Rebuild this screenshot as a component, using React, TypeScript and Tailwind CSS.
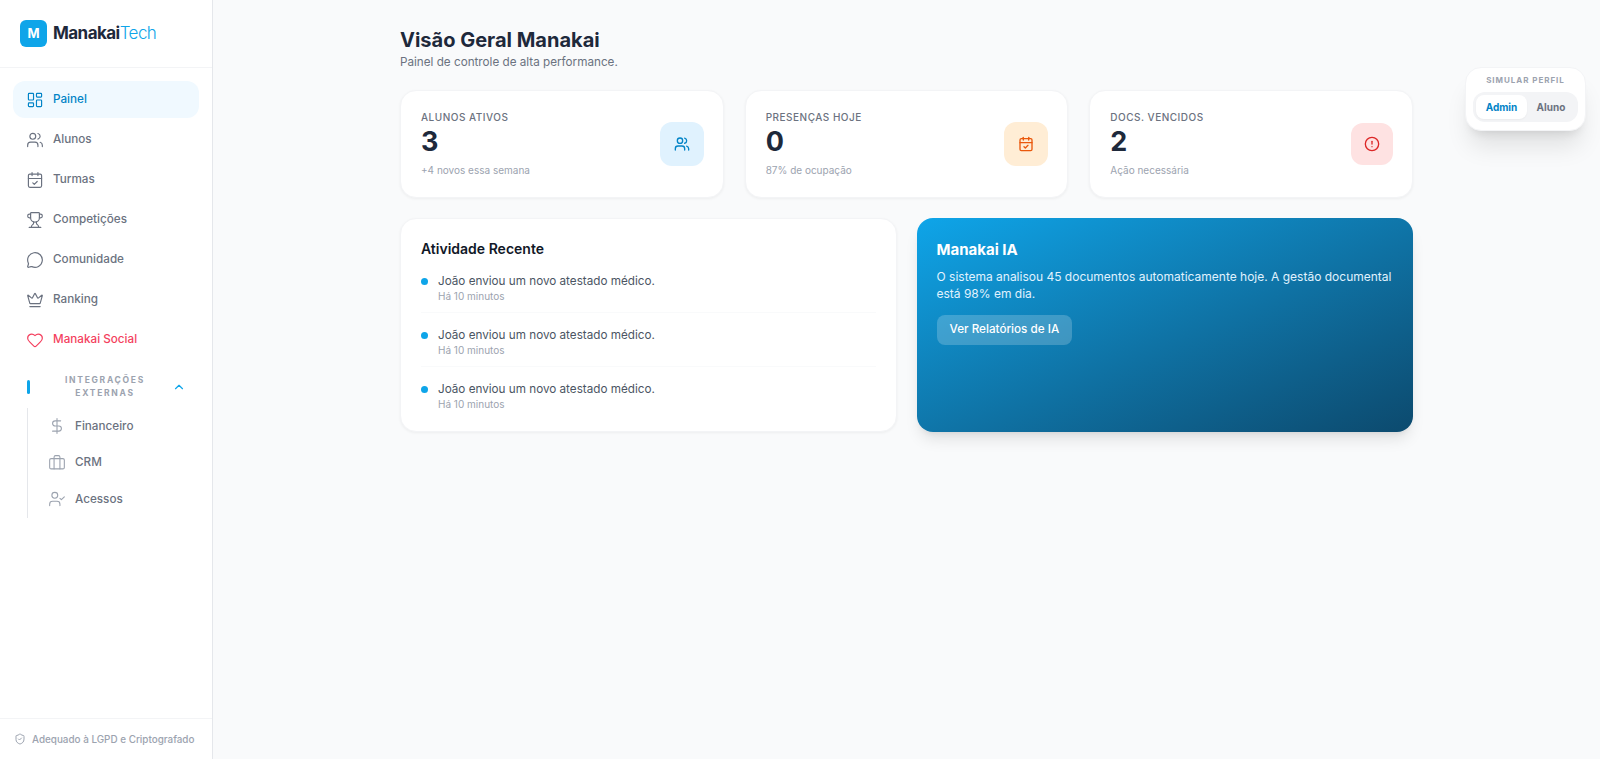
import {
  Briefcase,
  CalendarCheck,
  ChevronUp,
  CircleAlert,
  Crown,
  DollarSign,
  Heart,
  LayoutDashboard,
  MessageCircle,
  ShieldCheck,
  Trophy,
  UserCheck,
  Users,
} from 'lucide-react';

const navItems = [
  { label: 'Painel', icon: LayoutDashboard, className: 'bg-[#f0f9ff] text-[#0284c7]' },
  { label: 'Alunos', icon: Users, className: 'text-[#6b7280]' },
  { label: 'Turmas', icon: CalendarCheck, className: 'text-[#6b7280]' },
  { label: 'Competições', icon: Trophy, className: 'text-[#6b7280]' },
  { label: 'Comunidade', icon: MessageCircle, className: 'text-[#6b7280]' },
  { label: 'Ranking', icon: Crown, className: 'text-[#6b7280]' },
  { label: 'Manakai Social', icon: Heart, className: 'text-[#f43f5e]' },
];

const subItems = [
  { label: 'Financeiro', icon: DollarSign },
  { label: 'CRM', icon: Briefcase },
  { label: 'Acessos', icon: UserCheck },
];

const stats = [
  { label: 'ALUNOS ATIVOS', value: '3', note: '+4 novos essa semana', icon: Users, box: 'w-[44px] h-[44px] bg-[#e0f2fe] text-[#0284c7]' },
  { label: 'PRESENÇAS HOJE', value: '0', note: '87% de ocupação', icon: CalendarCheck, box: 'w-[44px] h-[44px] bg-[#ffedd5] text-[#ea580c]' },
  { label: 'DOCS. VENCIDOS', value: '2', note: 'Ação necessária', icon: CircleAlert, box: 'w-[42px] h-[42px] bg-[#fee2e2] text-[#dc2626]' },
];

const Sidebar = () => (
  <aside className="w-[213px] shrink-0 h-full bg-white border-r border-[#e5e7eb] flex flex-col">
    <div className="h-[68px] shrink-0 border-b border-[#f3f4f6] pl-5 flex items-center gap-[6px]">
      <div className="w-[27px] h-[27px] rounded-md bg-[#0ea5e9] text-white flex items-center justify-center text-[13px] font-bold">
        M
      </div>
      <span className="text-[17px] font-bold tracking-[-0.55px] text-[#1e293b]">
        Manakai<span className="font-light text-[#0ea5e9]">Tech</span>
      </span>
    </div>
    <nav className="flex-1 px-[13px] pt-[13px] flex flex-col gap-[3px]">
      {navItems.map(({ label, icon: Icon, className }) => (
        <div key={label} className={`h-[37px] shrink-0 rounded-xl pl-[14px] flex items-center gap-[10px] text-[11.7px] font-medium ${className}`}>
          <Icon size={16} strokeWidth={1.6} className="shrink-0 w-[16px] h-[16px] scale-110" />
          {label}
        </div>
      ))}
      <div className="mt-[11px] flex items-center h-[30px] pl-[14px] pr-[13px]">
        <span className="w-[3px] h-[14px] rounded-full bg-[#0ea5e9]" />
        <span className="flex-1 pl-2 text-center text-[8.5px] leading-[13px] font-bold tracking-[0.2em] text-[#9ca3af]">
          INTEGRAÇÕES<br />EXTERNAS
        </span>
        <ChevronUp size={14} className="text-[#0ea5e9]" />
      </div>
      <div className="ml-[14px] mt-[3px] border-l border-[#e5e7eb] pl-[7px] flex flex-col">
        {subItems.map(({ label, icon: Icon }) => (
          <div key={label} className="h-[36.6px] pl-[14px] flex items-center gap-[10px] text-[11.7px] font-medium text-[#6b7280]">
            <Icon size={16} strokeWidth={1.5} className="text-[#9ca3af] scale-110" />
            {label}
          </div>
        ))}
      </div>
    </nav>
    <div className="h-[41px] shrink-0 border-t border-[#f3f4f6] pl-[14px] flex items-center gap-[6px] text-[9.9px] font-medium text-[#9ca3af]">
      <ShieldCheck size={12} />
      Adequado à LGPD e Criptografado
    </div>
  </aside>
);

const StatCards = () => (
  <div className="grid grid-cols-3 gap-[21px]">
    {stats.map(({ label, value, note, icon: Icon, box }) => (
      <div key={label} className="h-[108px] bg-white rounded-2xl border border-[#f3f4f6] shadow-[0_1px_3px_rgba(0,0,0,0.05)] pl-5 pr-[19px] flex items-center justify-between">
        <div>
          <p className="text-[10px] leading-[14px] font-medium tracking-[0.05em] text-[#6b7280]">{label}</p>
          <p className="text-[27px] leading-[36px] font-bold text-[#1e293b]">{value}</p>
          <p className="mt-[3px] text-[10px] leading-[15px] text-[#9ca3af]">{note}</p>
        </div>
        <div className={`rounded-xl flex items-center justify-center ${box}`}>
          <Icon size={16} />
        </div>
      </div>
    ))}
  </div>
);

const Activity = () => (
  <div className="h-[214px] bg-white rounded-2xl border border-[#f3f4f6] shadow-[0_1px_3px_rgba(0,0,0,0.05)] px-5 pt-[20px]">
    <h3 className="text-[14px] leading-[20px] font-semibold text-[#111827]">Atividade Recente</h3>
    <div className="flex flex-col">
      {[0, 1, 2].map((i) => (
        <div key={i} className={`flex items-start gap-[10px] h-[54px] pt-[14px] ${i < 2 ? 'border-b border-[#f9fafb]' : ''}`}>
          <span className="w-[7px] h-[7px] rounded-full bg-[#0ea5e9] mt-[5px]" />
          <div>
            <p className="text-[11.7px] leading-[16px] text-[#4b5563]">João enviou um novo atestado médico.</p>
            <p className="text-[10px] leading-[14px] text-[#9ca3af]">Há 10 minutos</p>
          </div>
        </div>
      ))}
    </div>
  </div>
);

const AiCard = () => (
  <div className="h-[214px] rounded-2xl bg-gradient-to-br from-[#0ea5e9] to-[#0c4a6e] shadow-lg text-white px-5 pt-[22px]">
    <h3 className="text-[15px] leading-[20px] font-bold">Manakai IA</h3>
    <p className="mt-[8px] text-[12px] leading-[17px] text-[#e0f2fe]">
      O sistema analisou 45 documentos automaticamente hoje. A gestão documental está 98% em dia.
    </p>
    <button className="mt-[13px] h-[30px] px-[13px] rounded-lg bg-white/20 text-[11.7px] font-medium text-white">
      Ver Relatórios de IA
    </button>
  </div>
);

const ProfileSwitch = () => (
  <div className="absolute top-[67px] right-[14px] w-[121px] h-[64px] bg-white rounded-2xl border border-[#f3f4f6] shadow-xl px-[7px] pt-[6px]">
    <p className="text-center text-[8px] leading-[12px] font-bold tracking-[0.12em] text-[#9ca3af]">SIMULAR PERFIL</p>
    <div className="mt-[6px] h-[30px] rounded-xl bg-[#f3f4f6] p-[3px] flex">
      <span className="w-[51px] rounded-lg bg-white shadow-[0_1px_2px_rgba(0,0,0,0.04)] flex items-center justify-center text-[10px] font-bold text-[#0284c7]">Admin</span>
      <span className="flex-1 flex items-center justify-center text-[10px] font-bold text-[#6b7280]">Aluno</span>
    </div>
  </div>
);

export default function App() {
  return (
    <div className="relative flex h-screen bg-[#f9fafb] font-['Inter',sans-serif] overflow-hidden">
      <Sidebar />
      <main className="flex-1 pt-[27px]">
        <div className="w-[1013px] mx-auto">
          <h1 className="text-[20px] leading-[27px] font-bold text-[#1e293b]">Visão Geral Manakai</h1>
          <p className="text-[11.7px] leading-[16px] text-[#6b7280]">Painel de controle de alta performance.</p>
          <div className="mt-[20px]">
            <StatCards />
          </div>
          <div className="mt-[20px] grid grid-cols-2 gap-[20px]">
            <Activity />
            <AiCard />
          </div>
        </div>
      </main>
      <ProfileSwitch />
    </div>
  );
}
